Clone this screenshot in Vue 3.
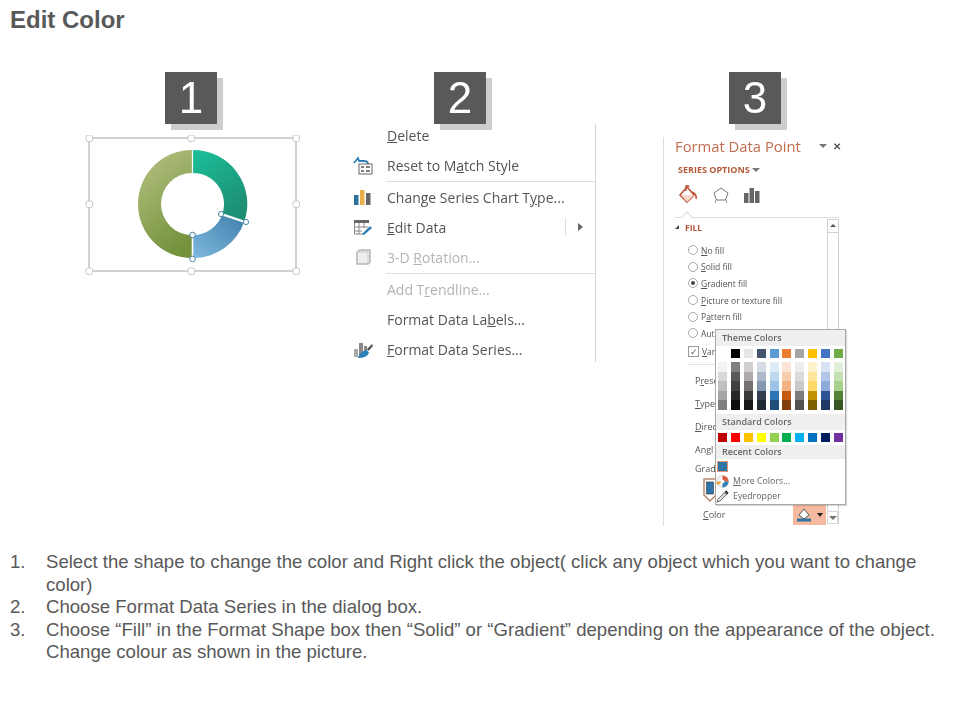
<script setup>
const themeTop = ['#ffffff','#000000','#e7e6e6','#44546a','#5b9bd5','#ed7d31','#a5a5a5','#ffc000','#4472c4','#70ad47']
const themeCols = [
  ['#f2f2f2','#d9d9d9','#bfbfbf','#a6a6a6','#808080'],
  ['#808080','#595959','#404040','#262626','#0d0d0d'],
  ['#d0cece','#afabab','#767171','#3a3838','#171717'],
  ['#d6dce4','#adb9ca','#8496b0','#333f4f','#222a35'],
  ['#deeaf6','#bdd7ee','#9dc3e6','#2e75b5','#1e4e79'],
  ['#fbe4d5','#f7cbac','#f4b183','#c55a11','#833c0b'],
  ['#ededed','#dbdbdb','#c9c9c9','#7b7b7b','#525252'],
  ['#fff2cc','#fee599','#ffd966','#bf9000','#7f6000'],
  ['#d9e2f3','#b4c6e7','#8eaadb','#2f5496','#1f3864'],
  ['#e2efd9','#c5e0b3','#a8d08d','#538135','#375623']
]
const standard = ['#c00000','#ff0000','#ffc000','#ffff00','#92d050','#00b050','#00b0f0','#0070c0','#002060','#7030a0']
const handles = [[4,3],[106,3],[211,3],[4,69],[211,69],[4,136],[106,136],[211,136]]
</script>

<template>
  <div class="slide">
    <h1 class="title">Edit Color</h1>

    <div class="figures">
      <section class="fig fig-one">
        <div class="badge">1</div>
        <svg class="chart" width="216" height="142" viewBox="0 0 216 142">
          <defs>
            <linearGradient id="g-teal" x1="0" y1="0" x2="0.6" y2="1">
              <stop offset="0" stop-color="#1cc09a" /><stop offset="1" stop-color="#1c8f74" />
            </linearGradient>
            <linearGradient id="g-blue" x1="0" y1="1" x2="1" y2="0">
              <stop offset="0" stop-color="#7fb8e0" /><stop offset="1" stop-color="#3f7fa8" />
            </linearGradient>
            <linearGradient id="g-olive" x1="0.2" y1="0" x2="0.6" y2="1">
              <stop offset="0" stop-color="#b3c07f" /><stop offset="1" stop-color="#74913c" />
            </linearGradient>
          </defs>
          <rect x="4" y="3" width="207" height="133" fill="none" stroke="#d2d2d2" stroke-width="2" />
          <rect
            v-for="(h, i) in handles" :key="i"
            :x="h[0] - 3" :y="h[1] - 3" width="6.500" height="6.500" rx="2"
            fill="#fff" stroke="#c8c8c8"
          />
          <g transform="translate(2 1)">
            <path d="M106 14 A54 54 0 0 1 157.600 84.800 L135.600 77.200 A31 31 0 0 0 106 37 Z" fill="url(#g-teal)" />
            <path d="M157.600 84.800 A54 54 0 0 1 106 122 L106 99 A31 31 0 0 0 135.600 77.200 Z" fill="url(#g-blue)" />
            <path d="M105 122 A54 54 0 0 1 105 14 L105 37 A31 31 0 0 0 105 99 Z" fill="url(#g-olive)" />
            <line x1="105.500" y1="14" x2="105.500" y2="37" stroke="#fff" stroke-width="1.200" />
            <line x1="134" y1="78" x2="158" y2="86" stroke="#fff" stroke-width="2" />
            <line x1="105.500" y1="99" x2="105.500" y2="122" stroke="#fff" stroke-width="1.600" />
            <g fill="#fff" stroke="#4f87a8" stroke-width="1">
              <circle cx="134" cy="78" r="2.600" /><circle cx="159" cy="86" r="2.600" />
              <circle cx="105.500" cy="99" r="2.800" /><circle cx="105.500" cy="123" r="2.800" />
            </g>
          </g>
        </svg>
      </section>

      <section class="fig fig-two">
        <div class="badge">2</div>
        <div class="menu">
          <div class="mi first"><span class="ic"></span><span><u>D</u>elete</span></div>
          <div class="mi">
            <span class="ic"><svg width="21" height="19" viewBox="0 0 21 19">
              <path d="M1 7 L5 2 L6 5 H11 Q15 5 15 8" fill="none" stroke="#2f7fb8" stroke-width="1.800" />
              <rect x="6" y="8" width="13" height="10" fill="#fff" stroke="#666" />
              <path d="M8 11h3M13 11h4M8 15h3M13 15h4" stroke="#555" stroke-width="1.300" />
            </svg></span>
            <span>Reset to M<u>a</u>tch Style</span>
          </div>
          <div class="sep"></div>
          <div class="mi">
            <span class="ic"><svg width="20" height="18" viewBox="0 0 20 18">
              <rect x="1" y="7" width="4.500" height="10" fill="#2f6f9f" />
              <rect x="7" y="2" width="4.500" height="15" fill="#e8b04a" />
              <rect x="13" y="5" width="4.500" height="12" fill="#666" />
            </svg></span>
            <span>Change Series Chart T<u>y</u>pe...</span>
          </div>
          <div class="mi has-sub">
            <span class="ic"><svg width="20" height="18" viewBox="0 0 20 18">
              <rect x="1" y="2" width="15" height="3" fill="#666" />
              <path d="M1.500 5v11h9M6 5v11M11 5v5M1 9h14M1 13h8" fill="none" stroke="#888" />
              <path d="M9 16 L17 8 L19 10 L11 17 Z" fill="#2f7fb8" />
            </svg></span>
            <span><u>E</u>dit Data</span>
            <span class="sub"></span>
          </div>
          <div class="mi off">
            <span class="ic"><svg width="20" height="18" viewBox="0 0 20 18">
              <path d="M4 4 L7 2 H17 V14 L15 16 H4 Z" fill="#eee" stroke="#b5b5b5" stroke-width="1.500" />
              <path d="M4 4 H15 V16" fill="none" stroke="#c8c8c8" />
            </svg></span>
            <span>3-D <u>R</u>otation...</span>
          </div>
          <div class="sep"></div>
          <div class="mi off"><span class="ic"></span><span>Add T<u>r</u>endline...</span></div>
          <div class="mi"><span class="ic"></span><span>Format Data La<u>b</u>els...</span></div>
          <div class="mi">
            <span class="ic"><svg width="20" height="19" viewBox="0 0 20 19">
              <rect x="1" y="9" width="4" height="8" fill="#aaa" />
              <rect x="6" y="3" width="4" height="12" fill="#888" />
              <rect x="11" y="6" width="3" height="6" fill="#888" />
              <path d="M19 4 L14 9 L15.500 11 L20 6 Z" fill="#555" />
              <path d="M5 17 Q9 10 14 10 L16 13 Q14 18 5 18 Z" fill="#2f7fb8" />
            </svg></span>
            <span><u>F</u>ormat Data Series...</span>
          </div>
        </div>
      </section>

      <section class="fig fig-three">
        <div class="badge">3</div>
        <div class="panel">
          <div class="p-head">
            <span class="p-title">Format Data Point</span>
            <span class="tri-down dark"></span>
            <span class="close">✕</span>
          </div>
          <div class="p-series">SERIES OPTIONS <span class="tri-down"></span></div>
          <div class="p-tabs">
            <svg width="22" height="22" viewBox="0 0 22 22">
              <path d="M10 3 L3 11 L10 18 L17 11 Z" fill="#fff" stroke="#c0573a" stroke-width="1.600" />
              <path d="M4 11 H17 L10 18 Z" fill="#f6d9cc" />
              <path d="M9 7 V2 Q11 1 12 3 M15 8 Q20 10 19 15" fill="none" stroke="#c0573a" stroke-width="1.500" />
            </svg>
            <svg width="20" height="20" viewBox="0 0 20 20">
              <path d="M10 3 L17 8 L14.500 15 H5.500 L3 8 Z" fill="#fff" stroke="#777" />
              <path d="M5 15 L4 18 M15 15 L16 18" stroke="#999" />
            </svg>
            <svg width="18" height="18" viewBox="0 0 18 18">
              <rect x="1" y="7" width="4.500" height="10" fill="#666" />
              <rect x="6.500" y="2" width="4.500" height="15" fill="#666" />
              <rect x="12" y="5" width="4.500" height="12" fill="#666" />
            </svg>
          </div>
          <div class="p-rule"><span class="notch"></span></div>
          <div class="p-body">
            <div class="p-content">
              <div class="fill-head"><span class="tri-corner"></span>FILL</div>
              <div class="radio"><i></i><span><u>N</u>o fill</span></div>
              <div class="radio"><i></i><span><u>S</u>olid fill</span></div>
              <div class="radio on"><i></i><span><u>G</u>radient fill</span></div>
              <div class="radio"><i></i><span><u>P</u>icture or texture fill</span></div>
              <div class="radio"><i></i><span>P<u>a</u>ttern fill</span></div>
              <div class="radio"><i></i><span>Aut</span></div>
              <div class="check"><i>✓</i><span><u>V</u>ar</span></div>
              <div class="hr"></div>
              <div class="field">P<u>r</u>ese</div>
              <div class="field"><u>T</u>ype</div>
              <div class="field"><u>D</u>irec</div>
              <div class="field">Angl</div>
              <div class="field short">Gradi</div>
              <div class="stop">
                <svg width="14" height="24" viewBox="0 0 14 24">
                  <path d="M1 1 H13 V17 L7 23 L1 17 Z" fill="#fff" stroke="#b98a72" stroke-width="1.500" />
                  <rect x="3.500" y="4" width="7" height="12" fill="#2e75a8" stroke="#333" stroke-width=".6" />
                </svg>
              </div>
              <div class="color-row">
                <span><u>C</u>olor</span>
                <span class="color-btn">
                  <svg width="17" height="14" viewBox="0 0 17 14">
                    <path d="M7 1 L2 7 L7 11 L12 7 Z" fill="#fff" stroke="#555" />
                    <rect x="0" y="10.500" width="14" height="3" fill="#2e75a8" />
                  </svg>
                  <span class="tri-down black"></span>
                </span>
                <span class="mini-drop"><span class="tri-down dark"></span></span>
              </div>
            </div>
            <div class="scroll"><div class="s-up"></div></div>
          </div>

          <div class="picker">
            <div class="pk-head">Theme Colors</div>
            <div class="sw-row first">
              <span v-for="c in themeTop" :key="c" class="sw" :style="{ background: c }"></span>
            </div>
            <div class="sw-row shades">
              <div v-for="(col, i) in themeCols" :key="i" class="sw-col">
                <span v-for="c in col" :key="c" class="shade" :style="{ background: c }"></span>
              </div>
            </div>
            <div class="pk-head gap">Standard Colors</div>
            <div class="sw-row std">
              <span v-for="c in standard" :key="c" class="sw" :style="{ background: c }"></span>
            </div>
            <div class="pk-head tight">Recent Colors</div>
            <div class="recent"><span class="recent-sw"></span></div>
            <div class="pk-item">
              <svg width="13" height="13" viewBox="0 0 14 14">
                <circle cx="7" cy="7" r="6.500" fill="#f2f2f2" stroke="#bbb" stroke-width=".5" />
                <path d="M7 7 L7 .5 A6.500 6.500 0 0 1 13.500 7 Z" fill="#e0593a" />
                <path d="M7 7 L13.500 7 A6.500 6.500 0 0 1 7 13.500 Z" fill="#2f7fb8" />
                <path d="M7 7 L2 11 A6.500 6.500 0 0 1 .5 7 Z" fill="#e8a33a" />
                <circle cx="7" cy="7" r="2" fill="#fff" />
              </svg>
              <span><u>M</u>ore Colors...</span>
            </div>
            <div class="pk-item">
              <svg width="13" height="13" viewBox="0 0 14 14">
                <path d="M1 13 L2 10 L9 3 L11 5 L4 12 Z" fill="#dfe8ee" stroke="#555" />
                <path d="M9 2 L11 0.500 L13.500 3 L12 5 Z" fill="#333" />
              </svg>
              <span>Eyedropper</span>
            </div>
          </div>
        </div>
      </section>
    </div>

    <ol class="steps">
      <li><span class="n">1.</span><span>Select the shape to change the color and Right click the object( click any object which you want to change color)</span></li>
      <li><span class="n">2.</span><span>Choose Format Data Series in the dialog box.</span></li>
      <li><span class="n">3.</span><span>Choose “Fill” in the Format Shape box then “Solid” or “Gradient” depending on the appearance of the object. Change colour as shown in the picture.</span></li>
    </ol>
  </div>
</template>

<style scoped>
.slide {
  width: 960px;
  height: 720px;
  background: #fff;
  overflow: hidden;
  font-family: "Liberation Sans", Arial, sans-serif;
  color: #595959;
}
.title {
  margin: 0;
  height: 72px;
  padding: 6px 0 0 10px;
  box-sizing: border-box;
  font-size: 24px;
  line-height: 27px;
  font-weight: 700;
  color: #595959;
}
.figures {
  display: flex;
  height: 455px;
  filter: blur(0.35px);
}
.fig { flex: none; }
.fig-one { width: 264px; margin-left: 85px; }
.fig-two { width: 247px; margin-left: 1px; }
.fig-three { width: 184px; margin-left: 66px; }
.badge {
  width: 52px;
  height: 52px;
  background: #595959;
  color: #fff;
  box-shadow: 6px 6px 0 #cdcdcd;
  font-size: 44px;
  line-height: 52px;
  text-align: center;
}
.fig-one .badge { margin-left: 80px; }
.fig-two .badge { margin-left: 84px; }
.fig-three .badge { margin-left: 66px; position: relative; z-index: 1; }
.chart { display: block; margin-top: 11px; }

.menu {
  position: relative;
  width: 246px;
  height: 238px;
  box-sizing: border-box;
  border-right: 1px solid #d4d4d4;
  font-family: "Open Sans", sans-serif;
  font-size: 14px;
  color: #555;
}
.mi {
  display: flex;
  align-items: center;
  height: 30px;
  position: relative;
}
.mi.first { height: 22px; margin-bottom: 4px; }
.ic {
  flex: none;
  width: 37px;
  display: flex;
  align-items: center;
  padding-left: 3px;
  box-sizing: border-box;
}
.off { color: #b4b4b4; }
.sep {
  height: 1px;
  margin: 1px 0 0 36px;
  background: #dedede;
}
.sub {
  position: absolute;
  left: 215px;
  top: 6px;
  height: 18px;
  border-left: 1px solid #ddd;
  padding-left: 12px;
  display: flex;
  align-items: center;
}
.sub::after {
  content: "";
  border-left: 5px solid #666;
  border-top: 4px solid transparent;
  border-bottom: 4px solid transparent;
}

.panel {
  position: relative;
  width: 184px;
  height: 389px;
  margin-top: 13px;
  box-sizing: border-box;
  border-left: 1px solid #dcdcdc;
  font-family: "Open Sans", sans-serif;
  color: #555;
}
.p-head {
  display: flex;
  align-items: center;
  height: 18px;
  padding-left: 11px;
}
.p-title { font-size: 14.800px; color: #c46c4e; width: 144px; white-space: nowrap; }
.close { font-size: 10px; color: #555; font-weight: 700; margin-left: 6px; }
.tri-down {
  display: inline-block;
  width: 0;
  height: 0;
  border-left: 4px solid transparent;
  border-right: 4px solid transparent;
  border-top: 4px solid #777;
  vertical-align: 1px;
}
.tri-down.black { border-top-color: #222; border-left-width: 3px; border-right-width: 3px; }
.p-series {
  margin: 9px 0 0 14px;
  font-size: 9px;
  line-height: 12px;
  font-weight: 700;
  color: #b5583a;
  white-space: nowrap;
}
.p-tabs {
  display: flex;
  align-items: center;
  gap: 12px;
  height: 24px;
  padding-left: 13px;
  margin-top: 7px;
}
.p-rule {
  position: relative;
  height: 1px;
  margin: 10px 8px 0 11px;
  background: #dcdcdc;
}
.notch {
  position: absolute;
  left: 8px;
  top: -4px;
  width: 7px;
  height: 7px;
  background: #fff;
  border-left: 1px solid #dcdcdc;
  border-top: 1px solid #dcdcdc;
  transform: rotate(45deg);
}
.p-body {
  display: flex;
  height: 309px;
  margin-top: 1px;
}
.p-content { width: 163px; flex: none; }
.fill-head {
  display: flex;
  align-items: center;
  height: 14px;
  margin-top: 1px;
  padding-left: 11px;
  font-size: 8.500px;
  font-weight: 700;
  color: #b5583a;
}
.tri-corner {
  width: 0;
  height: 0;
  border-left: 4px solid transparent;
  border-bottom: 4px solid #444;
  margin-right: 6px;
}
.radio, .check {
  display: flex;
  align-items: center;
  height: 16.600px;
  padding-left: 24px;
  font-size: 8.500px;
  white-space: nowrap;
}
.fill-head + .radio { margin-top: 8px; }
.radio i {
  flex: none;
  width: 8px;
  height: 8px;
  border: 1px solid #aaa;
  border-radius: 50%;
  margin-right: 3px;
  position: relative;
}
.radio.on i::after {
  content: "";
  position: absolute;
  left: 2px;
  top: 2px;
  width: 4px;
  height: 4px;
  border-radius: 50%;
  background: #444;
}
.check { margin-top: 2px; }
.check i {
  flex: none;
  width: 9px;
  height: 9px;
  border: 1px solid #999;
  margin-right: 3px;
  font-style: normal;
  font-size: 9px;
  line-height: 9px;
  text-align: center;
}
.hr { height: 1px; background: #e4e4e4; margin: 4px 0 0 24px; }
.field {
  height: 23px;
  line-height: 23px;
  padding-left: 31px;
  font-size: 9px;
  white-space: nowrap;
}
.hr + .field { margin-top: 4px; }
.short { height: 14px; line-height: 14px; margin-top: 1px; }
.stop { height: 24px; padding-left: 39px; margin-top: 2px; }
.color-row {
  display: flex;
  align-items: center;
  height: 22px;
  margin-top: 1px;
  padding-left: 39px;
  font-size: 9px;
  position: relative;
}
.color-btn {
  position: absolute;
  left: 129px;
  top: 1px;
  width: 33px;
  height: 21px;
  box-sizing: border-box;
  background: #f5b9a0;
  display: flex;
  align-items: center;
  justify-content: center;
  gap: 3px;
}
.mini-drop {
  position: absolute;
  left: 163px;
  top: 8px;
  width: 11px;
  height: 13px;
  border: 1px solid #d8d8d8;
  box-sizing: border-box;
  display: flex;
  align-items: center;
  justify-content: center;
}
.scroll {
  flex: none;
  width: 10px;
  height: 304px;
  border: 1px solid #d0d0d0;
  border-bottom: 0;
  background: #fff;
}
.s-up {
  height: 12px;
  border-bottom: 1px solid #d0d0d0;
  position: relative;
}
.s-up::after {
  content: "";
  position: absolute;
  left: 2px;
  top: 4px;
  border-left: 3px solid transparent;
  border-right: 3px solid transparent;
  border-bottom: 3px solid #555;
}
.picker {
  position: absolute;
  left: 51px;
  top: 192px;
  width: 131px;
  height: 176px;
  box-sizing: border-box;
  background: #fff;
  border: 1px solid #a8a8a8;
  box-shadow: 1px 1px 1px rgba(0, 0, 0, 0.15);
}
.pk-head {
  height: 16px;
  line-height: 16px;
  padding-left: 6px;
  background: #efefef;
  font-size: 9px;
  font-weight: 600;
  color: #666;
  white-space: nowrap;
}
.pk-head.gap { margin-top: 4px; }
.pk-head.tight { height: 14px; line-height: 14px; margin-top: 3px; }
.sw-row {
  display: flex;
  gap: 3.900px;
  padding-left: 2px;
}
.sw-row.first { margin-top: 3px; }
.sw-row.shades { margin-top: 4px; }
.sw-row.std { margin-top: 3px; }
.sw { width: 9px; height: 9px; flex: none; }
.sw-col { width: 9px; flex: none; display: flex; flex-direction: column; }
.shade { height: 9.600px; }
.recent { height: 15px; padding: 3px 0 0 2px; box-sizing: border-box; }
.recent-sw {
  display: block;
  width: 9px;
  height: 9px;
  background: #2e75a8;
  outline: 1px solid #e5956f;
}
.pk-item {
  display: flex;
  align-items: center;
  gap: 4px;
  height: 15px;
  font-size: 8.800px;
  color: #666;
  white-space: nowrap;
}

.steps {
  list-style: none;
  margin: 24px 0 0;
  padding: 0 0 0 10px;
  font-size: 18.600px;
  line-height: 22.500px;
  color: #595959;
}
.steps li { display: flex; width: 935px; }
.n { flex: none; width: 36px; }
</style>
